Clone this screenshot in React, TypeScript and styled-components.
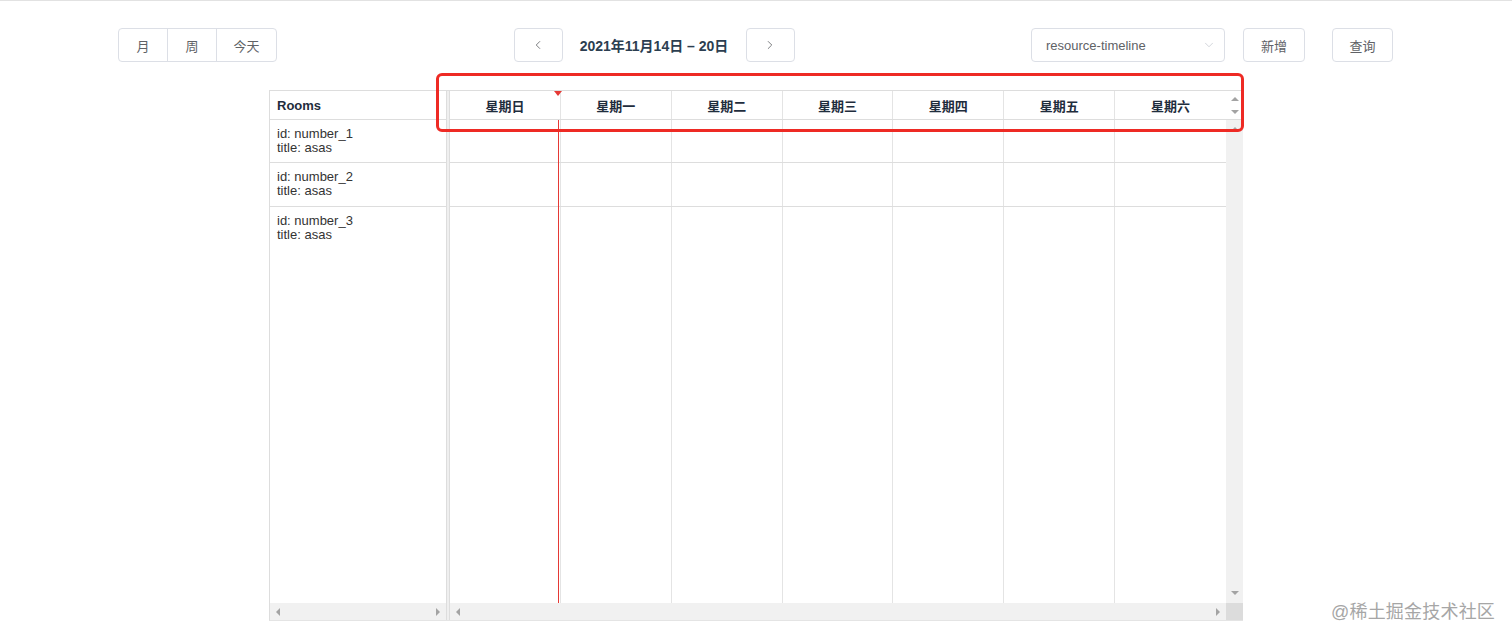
import React from "react";
import styled, { createGlobalStyle } from "styled-components";
import { ChevronLeft, ChevronRight, ChevronDown } from "lucide-react";

const days = ["星期日", "星期一", "星期二", "星期三", "星期四", "星期五", "星期六"];
const rooms = [
  { id: "number_1", title: "asas", height: 43 },
  { id: "number_2", title: "asas", height: 44 },
  { id: "number_3", title: "asas", height: 0 },
];

const GlobalStyle = createGlobalStyle`
  html, body {
    margin: 0;
    padding: 0;
    background: #fff;
  }
  body {
    font-family: "Liberation Sans", "Noto Sans CJK SC", sans-serif;
  }
`;

const App = () => {
  return (
    <Page>
      <GlobalStyle />
      <Toolbar>
        <ButtonGroup>
          <GroupButton $width={48}>月</GroupButton>
          <GroupButton $width={49}>周</GroupButton>
          <GroupButton $width={60}>今天</GroupButton>
        </ButtonGroup>

        <Center>
          <NavButton>
            <ChevronLeft size={14} strokeWidth={1.4} />
          </NavButton>
          <Title>2021年11月14日 – 20日</Title>
          <NavButton>
            <ChevronRight size={14} strokeWidth={1.4} />
          </NavButton>
        </Center>

        <Right>
          <Select>
            <span>resource-timeline</span>
            <ChevronDown size={14} strokeWidth={1.2} color="#c0c4cc" />
          </Select>
          <ActionButton $width={62}>新增</ActionButton>
          <ActionButton $width={61} $gap={27}>
            查询
          </ActionButton>
        </Right>
      </Toolbar>

      <Calendar>
        <ResourcePane>
          <ResourceHeader>Rooms</ResourceHeader>
          {rooms.map((r) => (
            <ResourceRow key={r.id} $height={r.height}>
              <div>id: {r.id}</div>
              <div>title: {r.title}</div>
            </ResourceRow>
          ))}
          <HScroll>
            <ArrowLeft />
            <ArrowRight />
          </HScroll>
        </ResourcePane>

        <Divider />

        <TimelinePane>
          <TimelineHeader>
            <DayRow>
              {days.map((d) => (
                <DayCell key={d}>{d}</DayCell>
              ))}
            </DayRow>
            <HeaderGutter>
              <ArrowUp />
              <ArrowDown />
            </HeaderGutter>
          </TimelineHeader>

          <TimelineBody>
            <Slots>
              {rooms.map((r) => (
                <SlotRow key={r.id} $height={r.height}>
                  {days.map((d) => (
                    <Slot key={d} />
                  ))}
                </SlotRow>
              ))}
            </Slots>
            <VScroll>
              <ArrowUp />
              <ArrowDown />
            </VScroll>
          </TimelineBody>

          <TimelineFooter>
            <HScroll $fill>
              <ArrowLeft />
              <ArrowRight />
            </HScroll>
            <Corner />
          </TimelineFooter>

          <NowArrow />
          <NowLine />
        </TimelinePane>

        <Highlight />
      </Calendar>

      <Watermark>@稀土掘金技术社区</Watermark>
    </Page>
  );
};

const Page = styled.div`
  position: relative;
  width: 1512px;
  height: 638px;
  overflow: hidden;
  border-top: 1px solid #e2e2e2;
  box-sizing: border-box;
`;

const Toolbar = styled.div`
  display: flex;
  justify-content: space-between;
  align-items: center;
  padding: 0 119px 0 118px;
  margin-top: 27px;
  height: 34px;
`;

const ButtonGroup = styled.div`
  display: flex;
  border: 1px solid #dcdfe6;
  border-radius: 4px;
  height: 34px;
  box-sizing: border-box;
`;

const GroupButton = styled.div<{ $width: number }>`
  width: ${(p) => p.$width}px;
  display: flex;
  align-items: center;
  justify-content: center;
  font-size: 13px;
  color: #606266;
  box-sizing: border-box;

  & + & {
    border-left: 1px solid #dcdfe6;
  }
`;

const Center = styled.div`
  display: flex;
  align-items: center;
  gap: 16px;
`;

const NavButton = styled.div`
  width: 49px;
  height: 34px;
  box-sizing: border-box;
  border: 1px solid #dcdfe6;
  border-radius: 4px;
  display: flex;
  align-items: center;
  justify-content: center;
  color: #606266;
`;

const Title = styled.div`
  font-size: 14px;
  font-weight: bold;
  color: #2c3e50;
  white-space: nowrap;
  width: 151px;
  text-align: center;
`;

const Right = styled.div`
  display: flex;
  align-items: center;
`;

const Select = styled.div`
  width: 194px;
  height: 34px;
  box-sizing: border-box;
  border: 1px solid #dcdfe6;
  border-radius: 4px;
  display: flex;
  align-items: center;
  justify-content: space-between;
  padding: 0 8px 0 14px;
  font-size: 13px;
  color: #606266;
`;

const ActionButton = styled.div<{ $width: number; $gap?: number }>`
  width: ${(p) => p.$width}px;
  height: 34px;
  margin-left: ${(p) => p.$gap ?? 18}px;
  box-sizing: border-box;
  border: 1px solid #dcdfe6;
  border-radius: 4px;
  display: flex;
  align-items: center;
  justify-content: center;
  font-size: 13px;
  color: #606266;
`;

const Calendar = styled.div`
  position: relative;
  display: flex;
  width: 974px;
  height: 531px;
  margin: 28px 0 0 269px;
  border-top: 1px solid #dddddd;
  border-left: 1px solid #dddddd;
  border-bottom: 1px solid #e4e4e4;
  box-sizing: border-box;
`;

const ResourcePane = styled.div`
  width: 176px;
  display: flex;
  flex-direction: column;
`;

const ResourceHeader = styled.div`
  height: 29px;
  flex: none;
  border-bottom: 1px solid #dddddd;
  box-sizing: border-box;
  display: flex;
  align-items: center;
  padding-left: 7px;
  font-size: 13px;
  font-weight: bold;
  color: #1f2d3d;
`;

const ResourceRow = styled.div<{ $height: number }>`
  ${(p) => (p.$height ? `height: ${p.$height}px; flex: none;` : "flex: 1;")}
  ${(p) => (p.$height ? "border-bottom: 1px solid #dddddd;" : "")}
  padding: 7px 0 0 7px;
  box-sizing: border-box;
  font-size: 13px;
  line-height: 14px;
  color: #333;
`;

const Divider = styled.div`
  width: 2px;
  background: #efefef;
  border-left: 1px solid #dddddd;
  border-right: 1px solid #dddddd;
`;

const TimelinePane = styled.div`
  position: relative;
  flex: 1;
  display: flex;
  flex-direction: column;
`;

const TimelineHeader = styled.div`
  display: flex;
  height: 29px;
  flex: none;
  border-bottom: 1px solid #dddddd;
  box-sizing: border-box;
`;

const DayRow = styled.div`
  flex: 1;
  display: grid;
  grid-template-columns: repeat(7, 1fr);
`;

const DayCell = styled.div`
  display: flex;
  align-items: center;
  justify-content: center;
  font-size: 13px;
  font-weight: bold;
  color: #1f2d3d;
  border-right: 1px solid #e4e4e4;

  &:last-child {
    border-right: none;
  }
`;

const HeaderGutter = styled.div`
  width: 17px;
  display: flex;
  flex-direction: column;
  align-items: center;
  justify-content: space-between;
  padding: 6px 0 5px;
  box-sizing: border-box;
`;

const TimelineBody = styled.div`
  flex: 1;
  display: flex;
`;

const Slots = styled.div`
  flex: 1;
  display: flex;
  flex-direction: column;
`;

const SlotRow = styled.div<{ $height: number }>`
  ${(p) => (p.$height ? `height: ${p.$height}px; flex: none;` : "flex: 1;")}
  ${(p) => (p.$height ? "border-bottom: 1px solid #dddddd;" : "")}
  box-sizing: border-box;
  display: grid;
  grid-template-columns: repeat(7, 1fr);
`;

const Slot = styled.div`
  border-right: 1px solid #e4e4e4;

  &:last-child {
    border-right: none;
  }
`;

const VScroll = styled.div`
  width: 17px;
  background: #f1f1f1;
  display: flex;
  flex-direction: column;
  align-items: center;
  justify-content: space-between;
  padding: 7px 0 8px;
  box-sizing: border-box;
`;

const TimelineFooter = styled.div`
  display: flex;
  height: 17px;
  flex: none;
`;

const HScroll = styled.div<{ $fill?: boolean }>`
  height: 17px;
  flex: ${(p) => (p.$fill ? "1" : "none")};
  background: #f1f1f1;
  display: flex;
  align-items: center;
  justify-content: space-between;
  padding: 0 6px;
  box-sizing: border-box;
`;

const Corner = styled.div`
  width: 17px;
  background: #dcdcdc;
`;

const ArrowLeft = styled.span`
  width: 0;
  height: 0;
  border-top: 4px solid transparent;
  border-bottom: 4px solid transparent;
  border-right: 4px solid #a3a3a3;
`;

const ArrowRight = styled.span`
  width: 0;
  height: 0;
  border-top: 4px solid transparent;
  border-bottom: 4px solid transparent;
  border-left: 4px solid #a3a3a3;
`;

const ArrowUp = styled.span`
  width: 0;
  height: 0;
  border-left: 4px solid transparent;
  border-right: 4px solid transparent;
  border-bottom: 4px solid #a3a3a3;
`;

const ArrowDown = styled.span`
  width: 0;
  height: 0;
  border-left: 4px solid transparent;
  border-right: 4px solid transparent;
  border-top: 4px solid #a3a3a3;
`;

const NowLine = styled.div`
  position: absolute;
  left: 108px;
  top: 29px;
  bottom: 17px;
  width: 1px;
  background: #e53935;
`;

const NowArrow = styled.span`
  position: absolute;
  top: 0;
  left: 104px;
  width: 0;
  height: 0;
  border-left: 4.5px solid transparent;
  border-right: 4.5px solid transparent;
  border-top: 5px solid #e53935;
`;

const Highlight = styled.div`
  position: absolute;
  left: 166px;
  top: -18px;
  width: 808px;
  height: 59px;
  border: 3px solid #ee2a24;
  border-radius: 6px;
  box-sizing: border-box;
  pointer-events: none;
`;

const Watermark = styled.div`
  position: absolute;
  left: 1331px;
  top: 596px;
  font-size: 18px;
  color: #a6a6a6;
  letter-spacing: 0.2px;
  font-family: "Liberation Sans", "Noto Sans CJK SC", sans-serif;
`;

export default App;
